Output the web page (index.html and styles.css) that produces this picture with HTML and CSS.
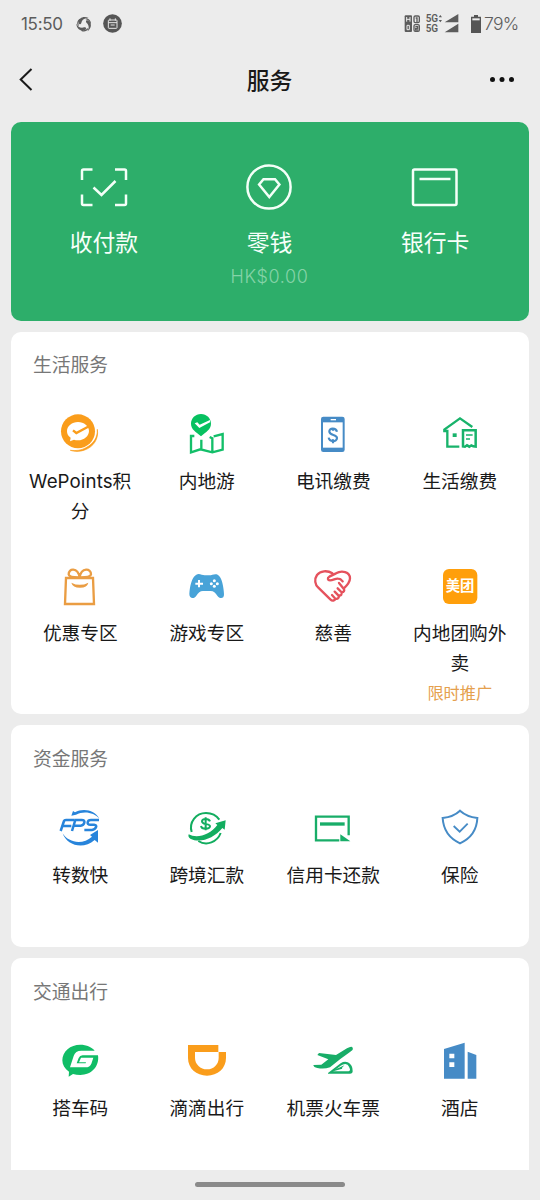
FILE: index.html
```html
<!DOCTYPE html>
<html lang="zh-CN">
<head>
<meta charset="utf-8">
<title>服务</title>
<link rel="stylesheet" href="styles.css">
</head>
<body>
<div class="phone">
  <header class="status">
    <span class="time">15:50</span>
    <svg class="swirl" width="16" height="16" viewBox="0 0 48 48" fill="#5c5c5c"><g id="arm"><path d="M8 22C7 6 22-1 38 6c-9-1-20 3-22 15-2 5-7 5-8 1z"/><path d="M29 10c7 1 12 6 13 13l3-1C44 13 38 7 29 7z"/></g><use href="#arm" transform="rotate(120 24 25)"/><use href="#arm" transform="rotate(240 24 25)"/></svg>
    <svg class="cal" width="19" height="19" viewBox="0 0 57 57"><circle cx="28.500" cy="28.500" r="28" fill="#555"/><g fill="none" stroke="#e5e5e5" stroke-width="3"><rect x="16" y="18" width="26" height="25" rx="2"/><path d="M16 26h26M21 13v7M37 13v7M23 33h12"/></g></svg>
    <span class="gap"></span>
    <svg class="signal" width="56" height="20" viewBox="0 0 168 60">
      <rect x="2" y="4" width="22" height="50" rx="3" fill="#5c5c5c"/><path d="M8 9v14M18 9v14M8 16h10M9 34v13h7v-13z" fill="none" stroke="#ececec" stroke-width="3"/>
      <g fill="none" stroke="#5c5c5c" stroke-width="4"><rect x="30" y="6" width="16" height="20" rx="4"/><path d="M35 12h4v12"/><rect x="30" y="32" width="16" height="20" rx="4"/><path d="M34 38h7v5h-6v5h8"/></g>
      <g class="net"><text x="65" y="23">5G</text><text x="65" y="55">5G</text></g>
      <path d="M109 3l5 7h-10zM109 25l5-7h-10zM163 0v25h-41zM163 29v26h-41z" fill="#5c5c5c"/>
    </svg>
    <svg class="battery" width="10" height="18" viewBox="0 0 30 54"><path d="M9 0h12v5h9v49H0V5h9z" fill="#555"/><path d="M4 10h22v6H4z" fill="#ececec"/></svg>
    <span class="percent">79%</span>
  </header>

  <nav class="nav">
    <svg width="16" height="26" viewBox="0 0 16 26" fill="none" stroke="#1a1a1a" stroke-width="2"><path d="M13.500 2L2.700 12.500 13.500 23"/></svg>
    <h1>服务</h1>
    <svg width="26" height="8" viewBox="0 0 26 8" fill="#111"><circle cx="3.500" cy="3.500" r="2.500"/><circle cx="13" cy="3.500" r="2.500"/><circle cx="22.500" cy="3.500" r="2.500"/></svg>
  </nav>

  <main class="content">
    <section class="wallet">
      <div class="pay">
        <svg width="48" height="48" viewBox="0 0 48 48" fill="none" stroke="#f4fff8" stroke-width="2.500"><path d="M2 17V8q0-1.500 1.500-1.500h9M35 6.500h9.500q1.500 0 1.500 1.500v9M2 31.500v9q0 1.500 1.500 1.500h9M35 42h9.500q1.500 0 1.500-1.500v-9M13.500 24.500l8 7.500L35.500 18"/></svg>
        <span>收付款</span>
      </div>
      <div class="pay">
        <svg width="48" height="48" viewBox="0 0 48 48" fill="none" stroke="#f4fff8" stroke-width="2.500"><circle cx="24" cy="24" r="21.600"/><path d="M18.500 16.200h11.500l4.400 5.300L24.300 34 14.100 21.500z"/></svg>
        <span>零钱</span>
        <small>HK$0.00</small>
      </div>
      <div class="pay">
        <svg width="48" height="48" viewBox="0 0 48 48" fill="none" stroke="#f4fff8" stroke-width="2.500"><rect x="2" y="6.500" width="43.500" height="35.500" rx="1.500"/><path d="M8.500 16h31"/></svg>
        <span>银行卡</span>
      </div>
    </section>

    <section class="card life">
      <h2>生活服务</h2>
      <div class="grid">
        <div class="item">
          <svg viewBox="147 36 132 132"><path d="M265 88c5 29-12 53-38 62-15 6-31 5-43 1 17 2 33 0 45-7 26-13 37-32 36-56z" fill="#fa9d1b" stroke="#fa9d1b" stroke-width="2"/><circle cx="207" cy="94" r="51" fill="#fa9d1b"/><path d="M207 66c18 0 33 12 33 27s-15 28-33 28q-7 0-12-2l-12 5 2-11c-8-5-11-12-11-20 0-15 15-27 33-27z" fill="#fff"/><path d="M192 91l10 8 38-20" fill="none" stroke="#fa9d1b" stroke-width="7"/></svg>
          <span class="label wide">WePoints积分</span>
        </div>
        <div class="item">
          <svg viewBox="525 36 132 132"><path d="M573 42c17 0 30 13 30 29 0 18-15 24-30 38-15-14-30-20-30-38 0-16 13-29 30-29z" fill="#07c160"/><path d="M554 70l8-3 7 7 31-14v7l-32 17z" fill="#fff"/><path d="M553 108h-10v49l28-9 36 9 31-8v-47l-27 7M607 156v-41l-8-4M574 119v31" fill="none" stroke="#13bf69" stroke-width="7"/></svg>
          <span class="label">内地游</span>
        </div>
        <div class="item">
          <svg viewBox="123 36 132 132"><rect x="153" y="50" width="71" height="106" rx="7" fill="#468bc6"/><path d="M159 67h59v76h-59z" fill="#fff"/><path d="M182 59h16" stroke="#fff" stroke-width="4"/><path d="M201 95c-3-12-24-12-23 0 1 13 23 7 23 19 0 13-23 12-25-1M189 83v9M189 118v12" fill="none" stroke="#468bc6" stroke-width="6.500"/></svg>
          <span class="label">电讯缴费</span>
        </div>
        <div class="item">
          <svg viewBox="501 36 132 132" fill="none" stroke="#18b36b" stroke-width="7"><path d="M565 140h-36V93h-9V89l47-34 37 26"/><path d="M545 100h12v11h-12z" fill="#18b36b" stroke="none"/><path d="M576 91h38v49l-7-1-6-3-6 4-7-4-6 4-6-1z" stroke-width="7.500"/><path d="M585 105h20M585 117h12" stroke-width="4.500"/></svg>
          <span class="label">生活缴费</span>
        </div>
        <div class="item">
          <svg viewBox="147 27 132 132" fill="none" stroke="#ea9d43" stroke-width="7"><path d="M171 69h81l3 78h-87z"/><path d="M211 67c-9 0-31 1-32-9-1-18 27-22 33 9 5-31 35-27 34-9-1 10-25 9-34 9z"/><path d="M187 83q25 13 51 0-3 15-25 15t-26-15z" fill="#ea9d43" stroke="none"/></svg>
          <span class="label">优惠专区</span>
        </div>
        <div class="item">
          <svg viewBox="525 27 132 132"><path d="M559 59c9-5 17 2 25 2h14c8 0 16-6 25-2 13 6 18 39 19 58 1 16-14 15-20 5-6-9-11-14-20-14h-23c-9 0-14 5-20 14-6 10-21 10-21-5 1-20 7-52 21-58z" fill="#48a3d8"/><path d="M567 75v22M556 86h23" stroke="#fff" stroke-width="6"/><g fill="#fff"><circle cx="613" cy="77" r="4.500"/><circle cx="613" cy="94" r="4.500"/><circle cx="604" cy="86" r="4.500"/><circle cx="622" cy="86" r="4.500"/></g></svg>
          <span class="label">游戏专区</span>
        </div>
        <div class="item">
          <svg viewBox="123 27 132 132" fill="none" stroke="#e5525d" stroke-width="7" stroke-linecap="round" stroke-linejoin="round"><path d="M187 55c-15-10-36-8-46 5-9 13-6 29 4 38l36 35c6 6 14 4 15-2l-10-11M196 131c8 2 13-4 9-10l-11-11M205 121c8 2 13-4 9-10l-11-11M214 111c8 1 11-5 7-10l-14-17M221 101c14-13 19-20 19-31 0-20-25-25-42-15l-20 10c-7 4-5 11 2 11 10 0 16-6 24-5q8 0 14 8"/></svg>
          <span class="label">慈善</span>
        </div>
        <div class="item">
          <svg viewBox="501 27 132 132"><rect x="516" y="42" width="103" height="105" rx="18" fill="#ff9f0b"/><text class="logo-text" x="524" y="109" textLength="86">美团</text></svg>
          <span class="label">内地团购外卖</span>
          <small class="promo">限时推广</small>
        </div>
      </div>
    </section>

    <section class="card money">
      <h2>资金服务</h2>
      <div class="grid">
        <div class="item">
          <svg viewBox="147 33 132 132"><g fill="none" stroke="#2784db" stroke-width="7.500"><path d="M155 108l10-30q1-3 6-3h25M161 93h26"/><path d="M189 108l10-33h19q10 0 8 8t-11 9h-20"/><path d="M270 75h-24q-9 0-10 7t8 7h11q9 1 6 8t-12 8h-23"/></g><path d="M187 62l5-14 6 4c25-14 61-6 73 19-15-18-46-24-70-12z" fill="#2784db"/><path d="M161 115c17 29 61 35 88 10l-6-5 24-15v38l-10-8c-35 31-84 16-96-20z" fill="#2784db"/></svg>
          <span class="label">转数快</span>
        </div>
        <div class="item">
          <svg viewBox="525 33 132 132"><path d="M545 111c-9-29 13-57 43-57 17 0 31 7 40 20M565 138c25 16 57 3 67-24" fill="none" stroke="#12ad5f" stroke-width="6"/><path d="M536 118c25 14 64 2 86-28l-6-5 31-9-3 28-7-5c-25 31-67 47-96 32-5-3-7-8-5-13z" fill="#12ad5f"/><path d="M600 79c-3-9-25-9-24 0 1 12 24 5 24 15 0 10-25 10-27-1M587 67v39" fill="none" stroke="#12ad5f" stroke-width="6"/></svg>
          <span class="label">跨境汇款</span>
        </div>
        <div class="item">
          <svg viewBox="123 33 132 132"><path d="M208 136h-70V65h98v56" fill="none" stroke="#18ad68" stroke-width="7"/><path d="M150 87h74" stroke="#18ad68" stroke-width="10"/><path d="M211 118l30 21h-30z" fill="#18ad68"/></svg>
          <span class="label">信用卡还款</span>
        </div>
        <div class="item">
          <svg viewBox="501 33 132 132" fill="none" stroke="#468bc6" stroke-width="6"><path d="M567 47q20 18 52 22-2 53-52 76-49-23-52-76 33-4 52-22z"/><path d="M548 93l18 17 24-24" stroke-width="5.500"/></svg>
          <span class="label">保险</span>
        </div>
      </div>
    </section>

    <section class="card travel">
      <h2>交通出行</h2>
      <div class="grid">
        <div class="item">
          <svg viewBox="147 27 132 132"><path d="M213 44c20 0 37 8 44 18h-40q-18 0-23 16l-11 34h46q14 0 18-11l6-18h-37l-6 14h21l-1 3h-27l6-16q3-8 12-8h46c5 34-20 59-53 59q-12 0-22-3l-13 8 1-15c-13-9-20-20-20-34 0-27 24-47 54-47z" fill="#10bd66"/></svg>
          <span class="label">搭车码</span>
        </div>
        <div class="item">
          <svg viewBox="525 27 132 132"><path d="M534 45h92v21h22v18c0 31-25 53-57 53s-57-22-57-53z" fill="#fa9d1b"/><path d="M555 66h71v17c0 20-15 35-35 35s-36-15-36-35z" fill="#fff"/><path d="M627 66V45" fill="none" stroke="#fff" stroke-width="3"/></svg>
          <span class="label">滴滴出行</span>
        </div>
        <div class="item">
          <svg viewBox="123 27 132 132"><path d="M130 105l24-1 21-16-33-13 5-6 51 6 33-20q14-8 17-2c2 5-1 8-7 12l-31 23-30 24q-18 6-38 2-11-2-12-9z" fill="#18ad68"/><path d="M174 129l38-29q11-7 21-3c12 6 15 16 15 27q0 7-8 7h-66zM190 124h46q5-1 4-6l-3-8q-3-8-11-8-7 0-14 5z" fill="#18ad68" fill-rule="evenodd"/><path d="M192 121l31-15-8 9z" fill="#18ad68"/><path d="M192 121l24-7" stroke="#18ad68" stroke-width="4"/></svg>
          <span class="label">机票火车票</span>
        </div>
        <div class="item">
          <svg viewBox="501 27 132 132" fill="#468bc6"><path d="M519 57l62-19v108h-62zM590 65l26 10v71h-26z"/><path d="M535 71h15v14h-15zM535 97h15v14h-15z" fill="#fff"/></svg>
          <span class="label">酒店</span>
        </div>
      </div>
    </section>
  </main>
  <footer class="home"><i></i></footer>
</div>
</body>
</html>
```
FILE: styles.css
```css
* { box-sizing: border-box; }
body {
  margin: 0;
  background: #ececec;
  color: #191919;
  font-family: Inter, "Noto Sans CJK SC", sans-serif;
}
svg { display: block; flex: none; }
h1, h2 { margin: 0; }
.phone { width: 540px; height: 1200px; display: flex; flex-direction: column; overflow: hidden; }

.status { height: 47px; display: flex; align-items: center; padding: 0 22px 0 21px; color: #5c5c5c; }
.time { width: 42px; font-size: 17px; letter-spacing: -0.3px; white-space: nowrap; }
.swirl { margin-left: 13px; }
.cal { margin-left: 11px; }
.gap { flex: 1; }
.signal { margin-right: 11px; }
.net { font: 600 30px Roboto, sans-serif; fill: #5c5c5c; }
.battery { margin-right: 3px; }
.percent { width: 34px; font-size: 17.500px; letter-spacing: -0.7px; font-weight: 300; white-space: nowrap; }

.nav { height: 65px; display: flex; align-items: center; justify-content: space-between; padding: 0 25px 0 18px; }
.nav h1 { font-size: 22.800px; font-weight: 500; line-height: 32px; padding: 2px 0 0 16px; }

.content { flex: 1; display: flex; flex-direction: column; gap: 11px; padding: 10px 11px 0; min-height: 0; }
.wallet { height: 199px; flex: none; display: grid; grid-template-columns: repeat(3, 1fr); padding: 41px 11px 0 10px; border-radius: 10px; background: #2dae6a; color: #f6fff9; }
.pay { display: flex; flex-direction: column; align-items: center; }
.pay span { margin-top: 15px; font-size: 22.800px; line-height: 34px; }
.pay small { margin-top: 5px; font-size: 18px; line-height: 24px; letter-spacing: 0.6px; color: #85d3a8; font-weight: 300; }

.card { flex: none; padding: 0 6px; border-radius: 10px; background: #fff; }
.card h2 { height: 80px; padding: 20px 0 0 16px; font-size: 18.800px; line-height: 28px; font-weight: 400; color: #777; }
.life { height: 382px; }
.money { height: 222px; }
.travel { height: 212px; border-radius: 10px 10px 0 0; }
.money h2, .travel h2 { height: 81px; padding-top: 21px; }
.grid { display: grid; grid-template-columns: repeat(4, 1fr); grid-auto-rows: 152px; }
.item { display: flex; flex-direction: column; align-items: center; }
.item svg { width: 44px; height: 44px; }
.label { width: 108px; margin-top: 11px; font-size: 18.700px; line-height: 29.500px; text-align: center; word-break: break-all; }
.wide { letter-spacing: 0.1px; }
.promo { margin-top: 3px; font-size: 16.200px; line-height: 24px; color: #e5a04e; }
.logo-text { font: 700 43px "Noto Sans CJK SC", sans-serif; fill: #fff; }

.home { height: 30px; flex: none; display: flex; justify-content: center; padding-top: 12px; }
.home i { width: 150px; height: 5px; border-radius: 3px; background: #8a8a8a; }
```
